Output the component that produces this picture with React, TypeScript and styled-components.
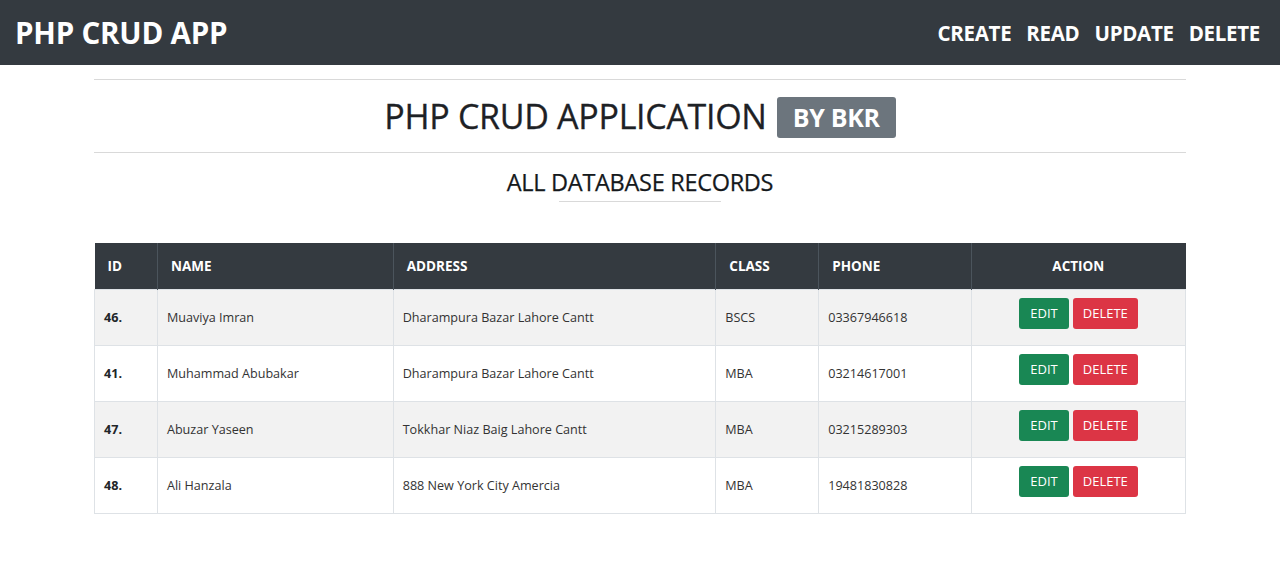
import { createGlobalStyle, styled } from "styled-components";

const GlobalStyle = createGlobalStyle`
  * { box-sizing: border-box; }
  body {
    margin: 0;
    background: #fff;
    font-family: "Open Sans", "Noto Sans", sans-serif;
    color: #212529;
  }
`;

const Navbar = styled.nav`
  height: 65px;
  background: #343a40;
  display: flex;
  align-items: center;
  justify-content: space-between;
  padding: 0 20px 0 15px;
`;

const Brand = styled.a`
  color: #fff;
  font-size: 29.5px;
  font-weight: 700;
  text-decoration: none;
  letter-spacing: -0.2px;
`;

const NavLinks = styled.div`
  display: flex;
  gap: 15px;
`;

const NavLink = styled.a`
  color: #fff;
  font-size: 20.5px;
  font-weight: 700;
  text-decoration: none;
  letter-spacing: -0.3px;
`;

const Container = styled.main`
  width: 1092px;
  margin: 0 auto;
  padding-top: 14px;
`;

const Rule = styled.hr`
  margin: 0;
  border: 0;
  border-top: 1px solid #d9d9d9;
`;

const Heading = styled.h1`
  margin: 0;
  height: 72px;
  display: flex;
  align-items: center;
  justify-content: center;
  gap: 10px;
  font-size: 34px;
  font-weight: 400;
  letter-spacing: -0.3px;
  color: #1d2125;
  -webkit-text-stroke: 0.3px #1d2125;
`;

const Badge = styled.span`
  background: #6c757d;
  color: #fff;
  -webkit-text-stroke: 0;
  font-size: 25px;
  font-weight: 700;
  padding: 2px 16px;
  border-radius: 3px;
  line-height: 37px;
  margin-top: 3px;
`;

const SubHeading = styled.h2`
  margin: 13px auto 0;
  width: fit-content;
  font-size: 23.5px;
  font-weight: 400;
  letter-spacing: -0.3px;
  text-align: center;
  color: #15191c;
  -webkit-text-stroke: 0.25px #15191c;
  &::after {
    content: "";
    display: block;
    width: 162px;
    margin: 3px auto 0;
    border-top: 1px solid #d9d9d9;
  }
`;

const Table = styled.table`
  margin-top: 41px;
  width: 100%;
  border-collapse: collapse;
  font-size: 12.6px;
`;

const Th = styled.th<{ $w: number; $center?: boolean }>`
  width: ${(p) => p.$w}px;
  height: 46px;
  background: #343a40;
  color: #fff;
  font-size: 13.5px;
  font-weight: 700;
  text-align: ${(p) => (p.$center ? "center" : "left")};
  padding: 0 14px 0 13px;
  border-right: 1px solid #4b545c;
  &:last-child { border-right: 0; }
`;

const Row = styled.tr<{ $striped: boolean }>`
  background: ${(p) => (p.$striped ? "#f2f2f2" : "#fff")};
`;

const Td = styled.td<{ $bold?: boolean }>`
  height: 56px;
  padding: 0 9px;
  border: 1px solid #dee2e6;
  font-weight: ${(p) => (p.$bold ? 700 : 400)};
  color: ${(p) => (p.$bold ? "#212529" : "#333")};
  vertical-align: middle;
`;

const ActionCell = styled.td`
  height: 56px;
  border: 1px solid #dee2e6;
  vertical-align: top;
  padding-top: 8px;
  text-align: center;
`;

const Actions = styled.div`
  display: inline-flex;
  gap: 4px;
`;

const Button = styled.button<{ $variant: "edit" | "delete" }>`
  height: 31px;
  padding: 0 ${(p) => (p.$variant === "edit" ? 11 : 10)}px;
  border: 0;
  border-radius: 3px;
  background: ${(p) => (p.$variant === "edit" ? "#198754" : "#dc3545")};
  color: #fff;
  font-family: inherit;
  font-size: 13px;
  cursor: pointer;
`;

const records = [
  { id: 46, name: "Muaviya Imran", address: "Dharampura Bazar Lahore Cantt", cls: "BSCS", phone: "03367946618" },
  { id: 41, name: "Muhammad Abubakar", address: "Dharampura Bazar Lahore Cantt", cls: "MBA", phone: "03214617001" },
  { id: 47, name: "Abuzar Yaseen", address: "Tokkhar Niaz Baig Lahore Cantt", cls: "MBA", phone: "03215289303" },
  { id: 48, name: "Ali Hanzala", address: "888 New York City Amercia", cls: "MBA", phone: "19481830828" },
];

const App = () => {
  return (
    <>
      <GlobalStyle />
      <Navbar>
        <Brand href="#">PHP CRUD APP</Brand>
        <NavLinks>
          <NavLink href="#">CREATE</NavLink>
          <NavLink href="#">READ</NavLink>
          <NavLink href="#">UPDATE</NavLink>
          <NavLink href="#">DELETE</NavLink>
        </NavLinks>
      </Navbar>
      <Container>
        <Rule />
        <Heading>
          PHP CRUD APPLICATION <Badge>BY BKR</Badge>
        </Heading>
        <Rule />
        <SubHeading>ALL DATABASE RECORDS</SubHeading>
        <Table>
          <thead>
            <tr>
              <Th $w={63}>ID</Th>
              <Th $w={236}>NAME</Th>
              <Th $w={323}>ADDRESS</Th>
              <Th $w={103}>CLASS</Th>
              <Th $w={153}>PHONE</Th>
              <Th $w={214} $center>ACTION</Th>
            </tr>
          </thead>
          <tbody>
            {records.map((r, i) => (
              <Row key={r.id} $striped={i % 2 === 0}>
                <Td $bold>{r.id}.</Td>
                <Td>{r.name}</Td>
                <Td>{r.address}</Td>
                <Td>{r.cls}</Td>
                <Td>{r.phone}</Td>
                <ActionCell>
                  <Actions>
                    <Button $variant="edit">EDIT</Button>
                    <Button $variant="delete">DELETE</Button>
                  </Actions>
                </ActionCell>
              </Row>
            ))}
          </tbody>
        </Table>
      </Container>
    </>
  );
};

export default App;
